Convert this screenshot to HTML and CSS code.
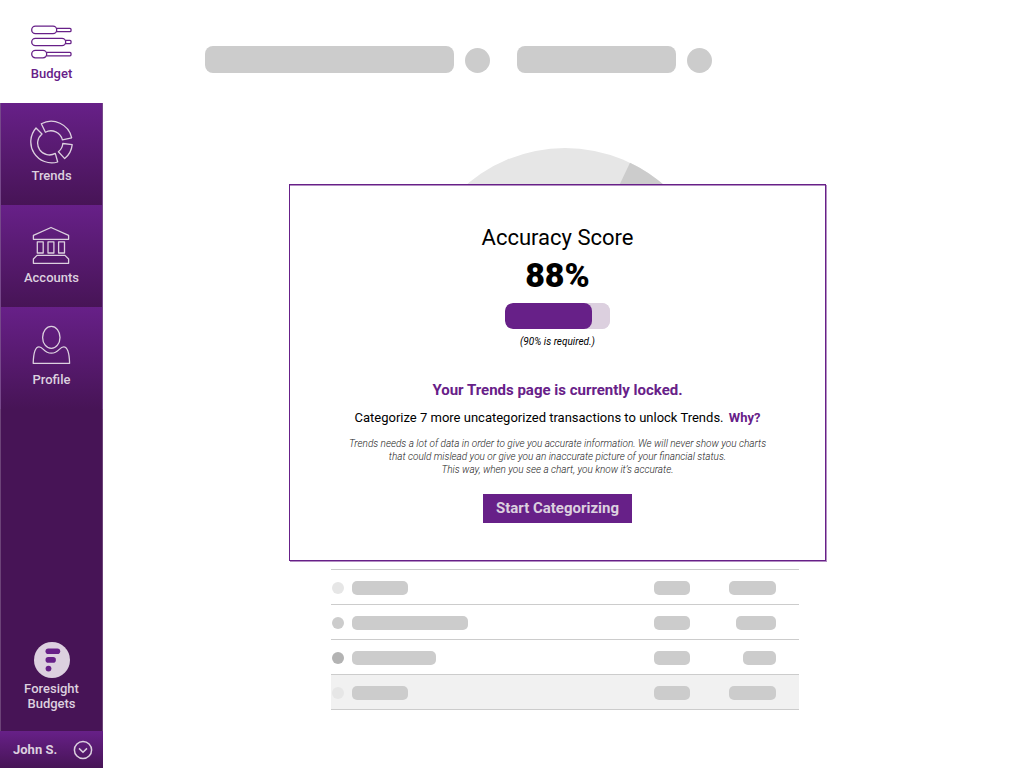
FILE: index.html
```html
<!DOCTYPE html>
<html lang="en">
<head>
<meta charset="utf-8">
<meta name="viewport" content="width=device-width, initial-scale=1">
<title>Foresight Budgets</title>
<link rel="stylesheet" href="styles.css">
</head>
<body>
<div class="app">
  <aside class="sidebar">
    <nav class="nav">
      <a class="nav-item nav-item-light" href="#budget">
        <svg class="icon" viewBox="30 20 44 44" aria-hidden="true">
          <rect x="31.7" y="26.2" width="25" height="7.4" rx="3.7"/>
          <path d="M56.7 28.3H70a1 1 0 0 1 1 1v1.4a1 1 0 0 1-1 1H56.7"/>
          <rect x="31.7" y="38.3" width="34" height="7.4" rx="3.7"/>
          <path d="M65.7 40.3H70a1 1 0 0 1 1 1v1.4a1 1 0 0 1-1 1H65.7"/>
          <rect x="31.7" y="50.4" width="15" height="7.4" rx="3.7"/>
          <path d="M46.7 52.4H70a1 1 0 0 1 1 1v1.4a1 1 0 0 1-1 1H46.7"/>
        </svg>
        <span>Budget</span>
      </a>
      <a class="nav-item" href="#trends">
        <svg class="icon" viewBox="30 120 44 44" aria-hidden="true">
          <path d="M41.3 123.8A21 21 0 0 1 71.7 137.8L62.4 139.9A11.8 11.8 0 0 0 45.4 132.2Z"/>
          <path d="M36 128A21 21 0 0 0 57.7 162L55.3 153.4A11.8 11.8 0 0 1 42 134Z"/>
          <path d="M72.2 144.6A21 21 0 0 1 64.7 158.6L58.4 151.8A11.8 11.8 0 0 0 62.8 143.5Z"/>
        </svg>
        <span>Trends</span>
      </a>
      <a class="nav-item" href="#accounts">
        <svg class="icon" viewBox="30 222 44 44" aria-hidden="true">
          <path d="M33.4 235.4L51 227.5L68.6 235.4V239.3H33.4Z"/>
          <path d="M37.3 241.8H43.2V253H37.3ZM48 241.8H53.9V253H48ZM58.6 241.8H64.5V253H58.6Z"/>
          <path d="M33.4 263.3V259L37 255.4H65L68.6 259V263.3Z"/>
        </svg>
        <span>Accounts</span>
      </a>
      <a class="nav-item" href="#profile">
        <svg class="icon" viewBox="30 324 44 44" aria-hidden="true">
          <ellipse cx="51.3" cy="337.4" rx="8.7" ry="11"/>
          <path d="M33.2 363.3C33.4 356 34.2 346.8 39 346.8C43.5 346.8 43.6 353.2 51.3 353.2C59 353.2 59.2 346.8 63.7 346.8C68.5 346.8 69.4 356 69.6 363.3Z"/>
        </svg>
        <span>Profile</span>
      </a>
    </nav>
    <div class="brand">
      <svg class="brand-logo" viewBox="0 0 36 36" aria-hidden="true">
        <circle class="logo-disc" cx="18" cy="18" r="18"/>
        <rect x="11.5" y="6.4" width="14.7" height="5.6" rx="2.8"/>
        <rect x="11.5" y="15.1" width="10.4" height="5.6" rx="2.8"/>
        <circle cx="14.5" cy="26.6" r="2.9"/>
      </svg>
      <span>Foresight<br>Budgets</span>
    </div>
    <button class="user" type="button">
      <span>John S.</span>
      <svg class="chevron" viewBox="0 0 20 20" aria-hidden="true">
        <circle cx="10" cy="10" r="8.6"/>
        <path d="M6 8.4L10 12.2L14 8.4"/>
      </svg>
    </button>
  </aside>

  <main class="main">
    <div class="filters" aria-hidden="true">
      <span class="filter filter-wide"></span><span class="round"></span>
      <span class="filter filter-narrow"></span><span class="round"></span>
    </div>
    <svg class="pie" viewBox="-151 -151 302 302" aria-hidden="true">
      <circle class="pie-base" r="151"/>
      <path class="pie-slice" d="M0 0L65 -136.3A151 151 0 0 1 151 0Z"/>
    </svg>
    <div class="rows" aria-hidden="true">
      <div class="row"><span class="dot"></span><span class="bar w56"></span><span class="bar w36"></span><span class="bar w47 end"></span></div>
      <div class="row"><span class="dot dot-mid"></span><span class="bar w116"></span><span class="bar w36"></span><span class="bar w40 end"></span></div>
      <div class="row"><span class="dot dot-dark"></span><span class="bar w84"></span><span class="bar w36"></span><span class="bar w33 end"></span></div>
      <div class="row row-total"><span class="dot"></span><span class="bar w56"></span><span class="bar w36"></span><span class="bar w47 end"></span></div>
    </div>

    <section class="dialog" role="dialog" aria-labelledby="score-title">
      <h1 class="title" id="score-title">Accuracy Score</h1>
      <p class="score">88%</p>
      <progress class="meter" value="83" max="100" aria-labelledby="score-title"></progress>
      <p class="required">(90% is required.)</p>
      <h2 class="locked">Your Trends page is currently locked.</h2>
      <p class="unlock">Categorize 7 more uncategorized transactions to unlock Trends. <a class="why" href="#why">Why?</a></p>
      <p class="explain">Trends needs a lot of data in order to give you accurate information. We will never show you charts<br>that could mislead you or give you an inaccurate picture of your financial status.<br>This way, when you see a chart, you know it’s accurate.</p>
      <button class="start" type="button">Start Categorizing</button>
    </section>
  </main>
</div>
</body>
</html>
```
FILE: styles.css
```css
* { box-sizing: border-box; }
body {
  margin: 0;
  font-family: Roboto, "Open Sans", sans-serif;
  color: #000;
  background: #fff;
}
h1, h2, p { margin: 0; }
button { font-family: inherit; border: 0; cursor: pointer; }

.app { display: flex; min-height: 100vh; }

.sidebar {
  display: flex;
  flex-direction: column;
  flex: none;
  width: 103px;
  background: #471456;
  color: #dcd0df;
}
.nav-item {
  display: flex;
  flex-direction: column;
  align-items: center;
  gap: 3px;
  height: 102px;
  padding-top: 17px;
  border-left: 1px solid #76488a;
  border-right: 1px solid #76488a;
  background: linear-gradient(#672088, #471456);
  color: #dcd0df;
  font-size: 13px;
  font-weight: 500;
  line-height: 18px;
  text-decoration: none;
}
.nav-item-light {
  height: 103px;
  padding-top: 20px;
  gap: 1px;
  border-color: #fff;
  background: #fff;
  color: #672088;
}
.icon { width: 44px; height: 44px; fill: none; stroke: currentColor; stroke-width: 1.3; stroke-linejoin: round; }

.brand {
  display: flex;
  flex: 1;
  flex-direction: column;
  align-items: center;
  justify-content: flex-end;
  gap: 3px;
  padding-bottom: 20px;
  border-left: 1px solid #6c4378;
  border-right: 1px solid #6c4378;
  font-size: 13px;
  font-weight: 500;
  line-height: 15px;
  text-align: center;
}
.brand-logo { width: 36px; height: 36px; fill: #672088; }
.logo-disc { fill: #dcd0df; }
.user {
  display: flex;
  align-items: center;
  justify-content: space-between;
  height: 37px;
  padding: 0 10px 0 13px;
  background: linear-gradient(#672088, #471456);
  color: #dcd0df;
  font-size: 13px;
  font-weight: 700;
}
.chevron { width: 20px; height: 20px; fill: none; stroke: currentColor; stroke-width: 1.5; }

.main { position: relative; flex: 1; min-width: 0; padding-left: 2px; }
.filters { display: flex; align-items: flex-end; padding: 46px 0 0 100px; }
.filter { height: 27px; border-radius: 8px; background: #ccc; }
.filter-wide { width: 249px; }
.filter-narrow { width: 159px; }
.round { width: 25px; height: 25px; margin: 0 27px 0 11px; border-radius: 50%; background: #ccc; }

.pie { display: block; width: 302px; height: 302px; margin: 75px auto 0; }
.pie-base { fill: #e6e6e6; }
.pie-slice { fill: #ccc; }

.rows { width: 468px; margin: 119px auto 58px; border-top: 1px solid #ccc; }
.row {
  display: grid;
  grid-template-columns: 12px 1fr 36px 78px;
  align-items: center;
  column-gap: 8px;
  height: 35px;
  padding: 2px 23px 0 1px;
  border-bottom: 1px solid #ccc;
}
.row-total { background: #f1f1f1; }
.dot { width: 12px; height: 12px; border-radius: 50%; background: #e6e6e6; }
.dot-mid { background: #ccc; }
.dot-dark { background: #b3b3b3; }
.bar { height: 14px; border-radius: 5px; background: #ccc; }
.end { justify-self: end; }
.w33 { width: 33px; }
.w36 { width: 36px; }
.w40 { width: 40px; }
.w47 { width: 47px; }
.w56 { width: 56px; }
.w84 { width: 84px; }
.w116 { width: 116px; }

.dialog {
  position: absolute;
  top: 184px;
  left: 50%;
  display: flex;
  flex-direction: column;
  align-items: center;
  width: 537px;
  margin-left: -275px;
  padding: 37px 24px;
  border: 1px solid #672088;
  box-shadow: 1px 1px 0 #b48fc3, inset 0 1px 0 #b48fc3;
  background: #fff;
  text-align: center;
}
.title { font-size: 22px; font-weight: 400; line-height: 32px; }
.score { font-size: 34px; font-weight: 900; line-height: 42px; }
.meter {
  appearance: none;
  width: 105px;
  height: 26px;
  margin: 7px 0 5px;
  overflow: hidden;
  border: 0;
  border-radius: 8px;
  background: #dcd0df;
}
.meter::-webkit-progress-bar { background: #dcd0df; border-radius: 8px; }
.meter::-webkit-progress-value { background: #672088; border-radius: 8px; }
.required { font-size: 10px; font-style: italic; line-height: 16px; }
.locked { margin-top: 30px; color: #672088; font-size: 15px; font-weight: 700; line-height: 20px; }
.unlock { margin-top: 8px; font-size: 13px; line-height: 20px; }
.why { margin-left: 2px; color: #672088; font-weight: 700; text-decoration: none; }
.explain { margin-top: 9px; color: #222; font-size: 10px; font-style: italic; font-weight: 300; line-height: 13px; }
.start {
  margin-top: 18px;
  padding: 0 13px 2px;
  height: 29px;
  background: #672088;
  color: #dcd0df;
  font-size: 15px;
  font-weight: 700;
}
```
